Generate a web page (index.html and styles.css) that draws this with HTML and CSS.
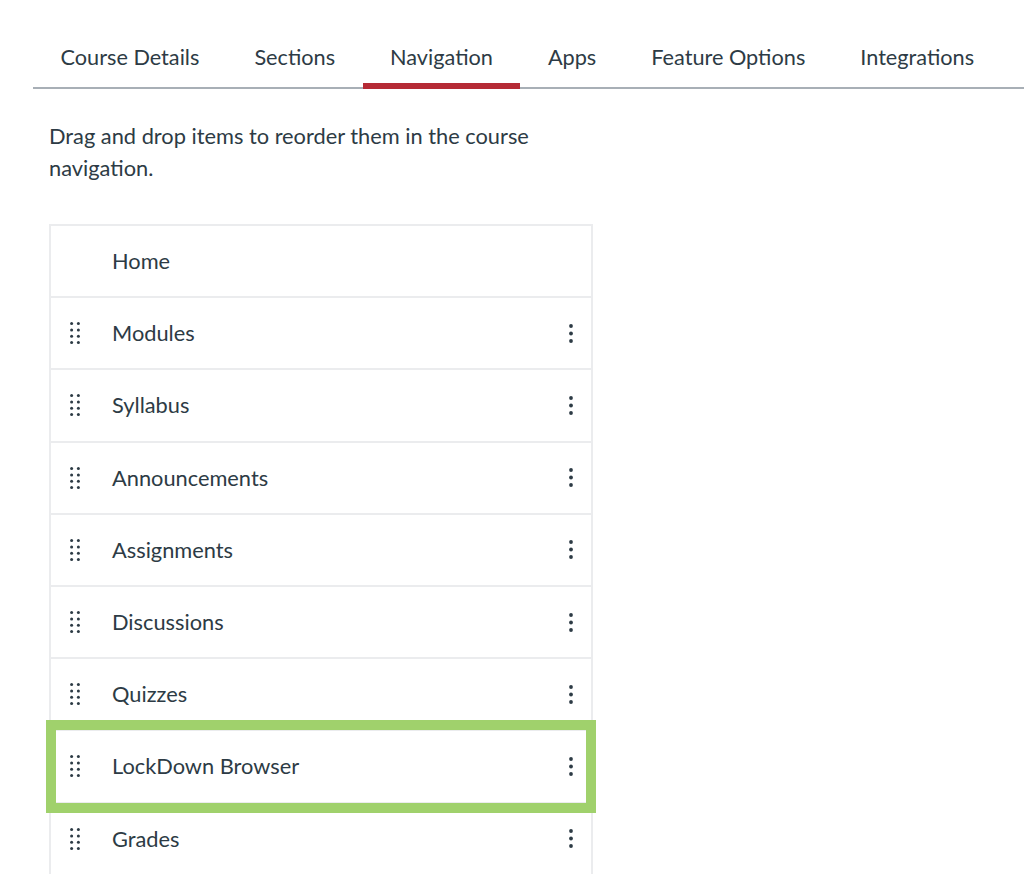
FILE: index.html
```html
<!DOCTYPE html>
<html lang="en">
<head>
<meta charset="utf-8">
<title>Course Settings - Navigation</title>
<link rel="stylesheet" href="styles.css">
</head>
<body>
<nav class="tabs">
  <div class="tab">Course Details</div>
  <div class="tab">Sections</div>
  <div class="tab active">Navigation</div>
  <div class="tab">Apps</div>
  <div class="tab">Feature Options</div>
  <div class="tab">Integrations</div>
</nav>
<main class="content">
  <p class="intro">Drag and drop items to reorder them in the course navigation.</p>
  <ul class="nav-list">
    <li class="nav-item"><span class="handle-space"></span><span class="label">Home</span></li>
    <li class="nav-item">
      <svg class="handle" viewBox="0 0 10 22" width="10" height="22"><g fill="#2d3b45"><circle cx="1.6" cy="1.6" r="1.5"/><circle cx="8.4" cy="1.6" r="1.5"/><circle cx="1.6" cy="7.9" r="1.5"/><circle cx="8.4" cy="7.9" r="1.5"/><circle cx="1.6" cy="14.2" r="1.5"/><circle cx="8.4" cy="14.2" r="1.5"/><circle cx="1.6" cy="20.4" r="1.5"/><circle cx="8.4" cy="20.4" r="1.5"/></g></svg>
      <span class="label">Modules</span>
      <svg class="kebab" viewBox="0 0 4 19" width="4" height="19"><g fill="#2d3b45"><circle cx="2" cy="2" r="1.9"/><circle cx="2" cy="9.5" r="1.9"/><circle cx="2" cy="17" r="1.9"/></g></svg>
    </li>
    <li class="nav-item">
      <svg class="handle" viewBox="0 0 10 22" width="10" height="22"><g fill="#2d3b45"><circle cx="1.6" cy="1.6" r="1.5"/><circle cx="8.4" cy="1.6" r="1.5"/><circle cx="1.6" cy="7.9" r="1.5"/><circle cx="8.4" cy="7.9" r="1.5"/><circle cx="1.6" cy="14.2" r="1.5"/><circle cx="8.4" cy="14.2" r="1.5"/><circle cx="1.6" cy="20.4" r="1.5"/><circle cx="8.4" cy="20.4" r="1.5"/></g></svg>
      <span class="label">Syllabus</span>
      <svg class="kebab" viewBox="0 0 4 19" width="4" height="19"><g fill="#2d3b45"><circle cx="2" cy="2" r="1.9"/><circle cx="2" cy="9.5" r="1.9"/><circle cx="2" cy="17" r="1.9"/></g></svg>
    </li>
    <li class="nav-item">
      <svg class="handle" viewBox="0 0 10 22" width="10" height="22"><g fill="#2d3b45"><circle cx="1.6" cy="1.6" r="1.5"/><circle cx="8.4" cy="1.6" r="1.5"/><circle cx="1.6" cy="7.9" r="1.5"/><circle cx="8.4" cy="7.9" r="1.5"/><circle cx="1.6" cy="14.2" r="1.5"/><circle cx="8.4" cy="14.2" r="1.5"/><circle cx="1.6" cy="20.4" r="1.5"/><circle cx="8.4" cy="20.4" r="1.5"/></g></svg>
      <span class="label">Announcements</span>
      <svg class="kebab" viewBox="0 0 4 19" width="4" height="19"><g fill="#2d3b45"><circle cx="2" cy="2" r="1.9"/><circle cx="2" cy="9.5" r="1.9"/><circle cx="2" cy="17" r="1.9"/></g></svg>
    </li>
    <li class="nav-item">
      <svg class="handle" viewBox="0 0 10 22" width="10" height="22"><g fill="#2d3b45"><circle cx="1.6" cy="1.6" r="1.5"/><circle cx="8.4" cy="1.6" r="1.5"/><circle cx="1.6" cy="7.9" r="1.5"/><circle cx="8.4" cy="7.9" r="1.5"/><circle cx="1.6" cy="14.2" r="1.5"/><circle cx="8.4" cy="14.2" r="1.5"/><circle cx="1.6" cy="20.4" r="1.5"/><circle cx="8.4" cy="20.4" r="1.5"/></g></svg>
      <span class="label">Assignments</span>
      <svg class="kebab" viewBox="0 0 4 19" width="4" height="19"><g fill="#2d3b45"><circle cx="2" cy="2" r="1.9"/><circle cx="2" cy="9.5" r="1.9"/><circle cx="2" cy="17" r="1.9"/></g></svg>
    </li>
    <li class="nav-item">
      <svg class="handle" viewBox="0 0 10 22" width="10" height="22"><g fill="#2d3b45"><circle cx="1.6" cy="1.6" r="1.5"/><circle cx="8.4" cy="1.6" r="1.5"/><circle cx="1.6" cy="7.9" r="1.5"/><circle cx="8.4" cy="7.9" r="1.5"/><circle cx="1.6" cy="14.2" r="1.5"/><circle cx="8.4" cy="14.2" r="1.5"/><circle cx="1.6" cy="20.4" r="1.5"/><circle cx="8.4" cy="20.4" r="1.5"/></g></svg>
      <span class="label">Discussions</span>
      <svg class="kebab" viewBox="0 0 4 19" width="4" height="19"><g fill="#2d3b45"><circle cx="2" cy="2" r="1.9"/><circle cx="2" cy="9.5" r="1.9"/><circle cx="2" cy="17" r="1.9"/></g></svg>
    </li>
    <li class="nav-item">
      <svg class="handle" viewBox="0 0 10 22" width="10" height="22"><g fill="#2d3b45"><circle cx="1.6" cy="1.6" r="1.5"/><circle cx="8.4" cy="1.6" r="1.5"/><circle cx="1.6" cy="7.9" r="1.5"/><circle cx="8.4" cy="7.9" r="1.5"/><circle cx="1.6" cy="14.2" r="1.5"/><circle cx="8.4" cy="14.2" r="1.5"/><circle cx="1.6" cy="20.4" r="1.5"/><circle cx="8.4" cy="20.4" r="1.5"/></g></svg>
      <span class="label">Quizzes</span>
      <svg class="kebab" viewBox="0 0 4 19" width="4" height="19"><g fill="#2d3b45"><circle cx="2" cy="2" r="1.9"/><circle cx="2" cy="9.5" r="1.9"/><circle cx="2" cy="17" r="1.9"/></g></svg>
    </li>
    <li class="nav-item highlighted">
      <svg class="handle" viewBox="0 0 10 22" width="10" height="22"><g fill="#2d3b45"><circle cx="1.6" cy="1.6" r="1.5"/><circle cx="8.4" cy="1.6" r="1.5"/><circle cx="1.6" cy="7.9" r="1.5"/><circle cx="8.4" cy="7.9" r="1.5"/><circle cx="1.6" cy="14.2" r="1.5"/><circle cx="8.4" cy="14.2" r="1.5"/><circle cx="1.6" cy="20.4" r="1.5"/><circle cx="8.4" cy="20.4" r="1.5"/></g></svg>
      <span class="label">LockDown Browser</span>
      <svg class="kebab" viewBox="0 0 4 19" width="4" height="19"><g fill="#2d3b45"><circle cx="2" cy="2" r="1.9"/><circle cx="2" cy="9.5" r="1.9"/><circle cx="2" cy="17" r="1.9"/></g></svg>
    </li>
    <li class="nav-item">
      <svg class="handle" viewBox="0 0 10 22" width="10" height="22"><g fill="#2d3b45"><circle cx="1.6" cy="1.6" r="1.5"/><circle cx="8.4" cy="1.6" r="1.5"/><circle cx="1.6" cy="7.9" r="1.5"/><circle cx="8.4" cy="7.9" r="1.5"/><circle cx="1.6" cy="14.2" r="1.5"/><circle cx="8.4" cy="14.2" r="1.5"/><circle cx="1.6" cy="20.4" r="1.5"/><circle cx="8.4" cy="20.4" r="1.5"/></g></svg>
      <span class="label">Grades</span>
      <svg class="kebab" viewBox="0 0 4 19" width="4" height="19"><g fill="#2d3b45"><circle cx="2" cy="2" r="1.9"/><circle cx="2" cy="9.5" r="1.9"/><circle cx="2" cy="17" r="1.9"/></g></svg>
    </li>
  </ul>
</main>
</body>
</html>
```

FILE: styles.css
```css
html, body {
  margin: 0;
  padding: 0;
  background: #ffffff;
}

body {
  font-family: Lato, "Open Sans", "Liberation Sans", sans-serif;
  color: #2d3b45;
  font-size: 21.8px;
  line-height: 32px;
}

.tabs {
  display: flex;
  margin-left: 33px;
  border-bottom: 2px solid #a8afb6;
}

.tab {
  padding: 41px 27.5px 10px;
  margin-bottom: -2px;
  border-bottom: 6px solid transparent;
  white-space: nowrap;
  font-size: 21.7px;
}

.tab.active {
  border-bottom-color: #b52a35;
}

.content {
  width: 544px;
  margin-left: 49px;
}

.intro {
  margin: 31px 0 40px;
}

.nav-list {
  list-style: none;
  margin: 0;
  padding: 0;
  border: 2px solid #ebecee;
  border-bottom: none;
}

.nav-item {
  position: relative;
  display: flex;
  align-items: center;
  height: 70.2px;
  padding: 0 18px 0 19px;
  border-bottom: 2px solid #ebecee;
}

.handle,
.handle-space {
  flex: none;
  width: 10px;
  height: 22px;
}

.label {
  margin-left: 32px;
}

.kebab {
  flex: none;
  margin-left: auto;
}

.nav-item.highlighted::after {
  content: "";
  position: absolute;
  left: -5px;
  right: -5px;
  top: -11.5px;
  bottom: -11px;
  border: 10px solid #a0d16c;
  pointer-events: none;
}
```
